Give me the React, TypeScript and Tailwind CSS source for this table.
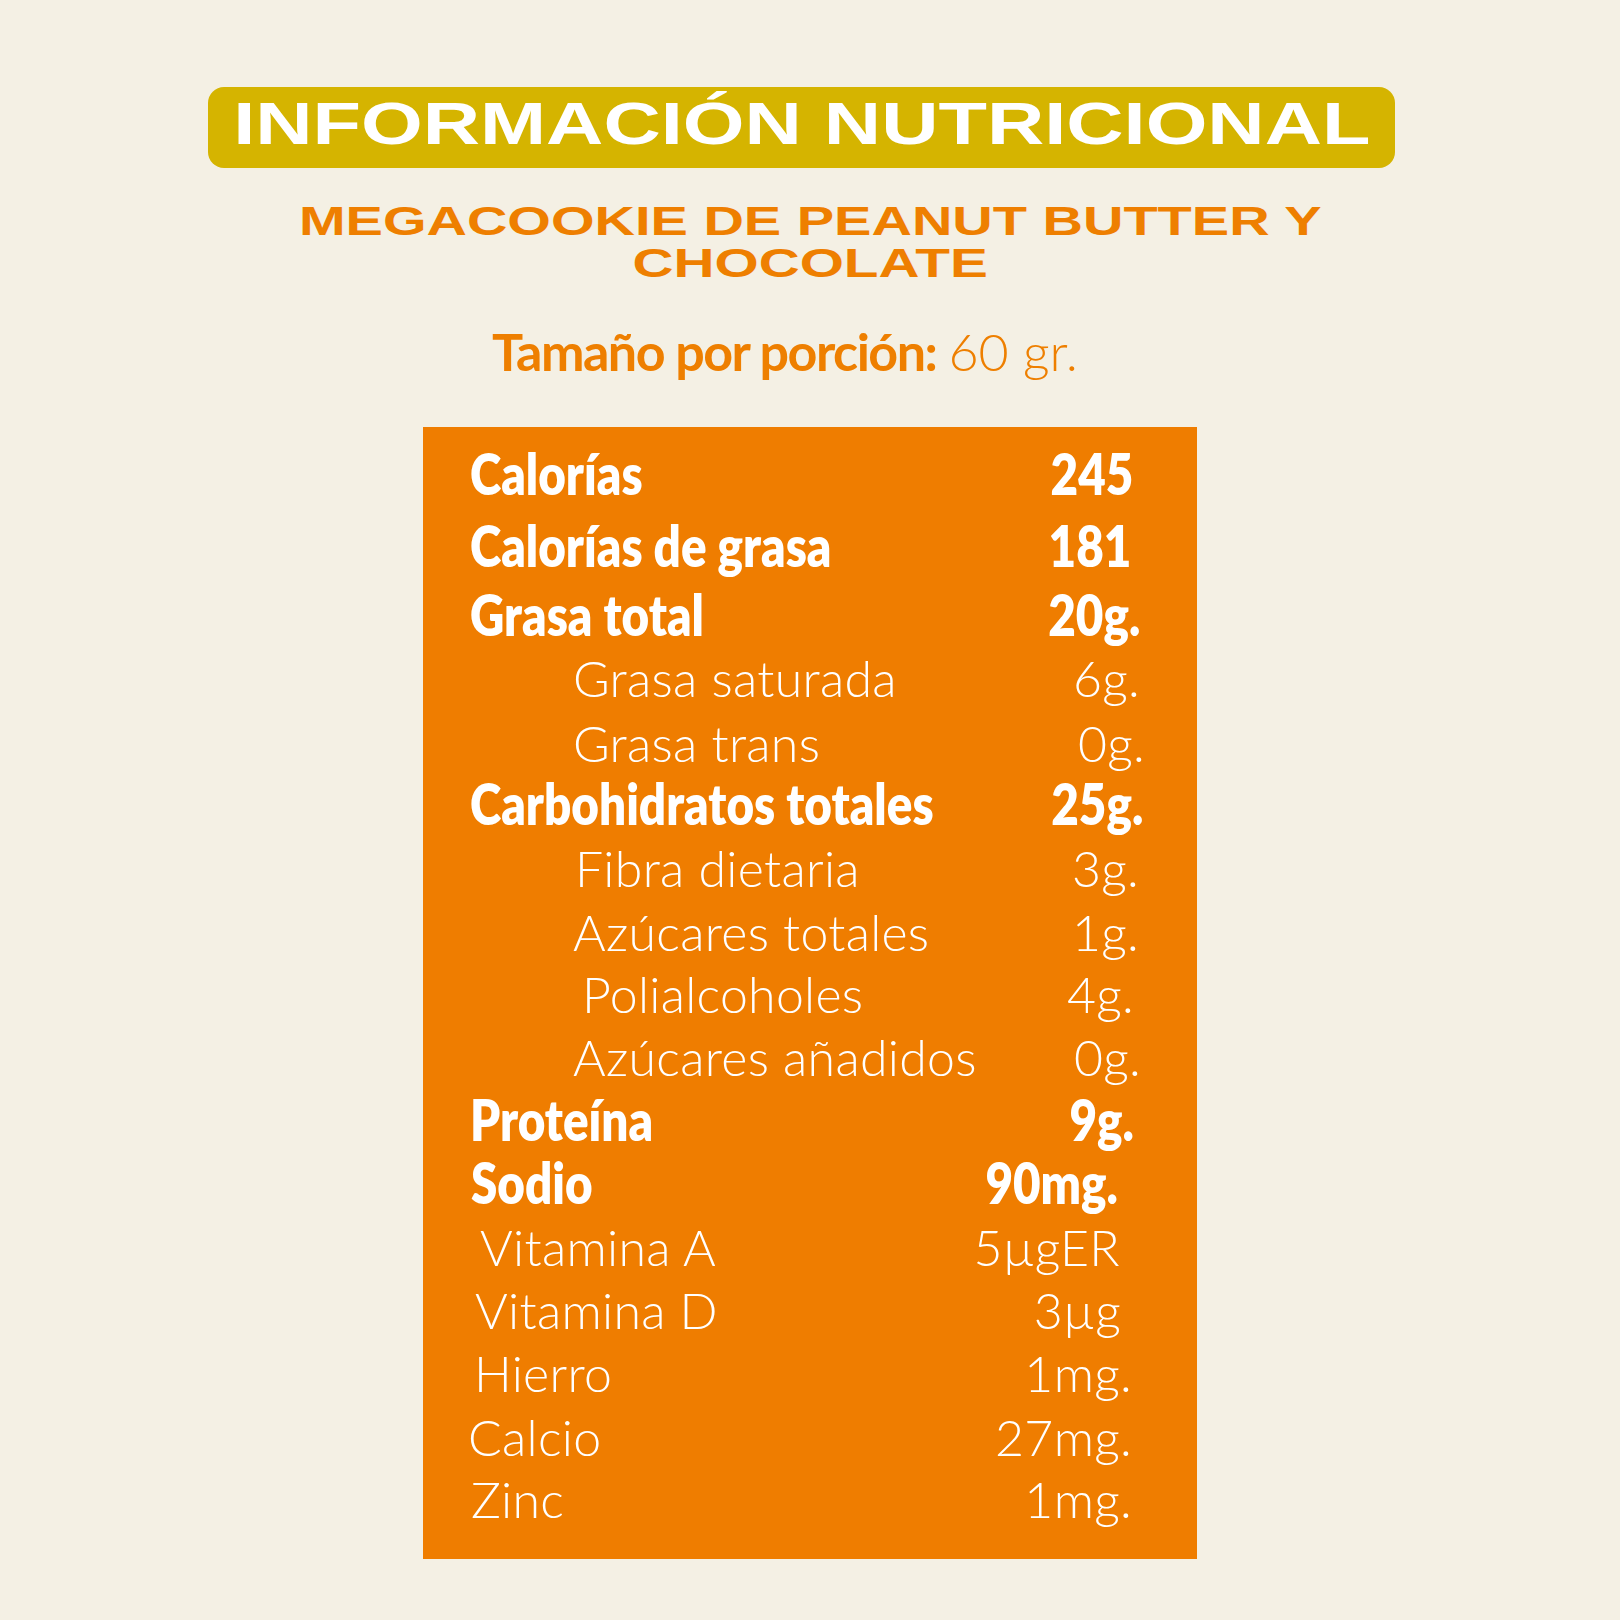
import React from "react";

type Row = {
  label: string;
  value: string;
  bold?: boolean;
  row: string; // margin + label indent + value right offset
};

const rows: Row[] = [
  { label: "Calorías", value: "245", bold: true, row: "mt-0 pl-[47px] pr-[64px]" },
  { label: "Calorías de grasa", value: "181", bold: true, row: "mt-[9px] pl-[47px] pr-[66px]" },
  { label: "Grasa total", value: "20g.", bold: true, row: "mt-[6px] pl-[47px] pr-[57px]" },
  { label: "Grasa saturada", value: "6g.", row: "mt-[1px] pl-[150px] pr-[57px]" },
  { label: "Grasa trans", value: "0g.", row: "mt-[2px] pl-[150px] pr-[52px]" },
  { label: "Carbohidratos totales", value: "25g.", bold: true, row: "-mt-[3px] pl-[47px] pr-[54px]" },
  { label: "Fibra dietaria", value: "3g.", row: "mt-[2px] pl-[152px] pr-[58px]" },
  { label: "Azúcares totales", value: "1g.", row: "mt-[1px] pl-[150px] pr-[58px]" },
  { label: "Polialcoholes", value: "4g.", row: "-mt-[1px] pl-[159px] pr-[63px]" },
  { label: "Azúcares añadidos", value: "0g.", row: "mt-0 pl-[150px] pr-[56px]" },
  { label: "Proteína", value: "9g.", bold: true, row: "-mt-[1px] pl-[47px] pr-[63px]" },
  { label: "Sodio", value: "90mg.", bold: true, row: "mt-0 pl-[48px] pr-[79px]" },
  { label: "Vitamina A", value: "5µgER", row: "mt-[2px] pl-[57px] pr-[77px]" },
  { label: "Vitamina D", value: "3µg", row: "mt-0 pl-[52px] pr-[76px]" },
  { label: "Hierro", value: "1mg.", row: "mt-0 pl-[51px] pr-[65px]" },
  { label: "Calcio", value: "27mg.", row: "mt-[1px] pl-[45px] pr-[65px]" },
  { label: "Zinc", value: "1mg.", row: "-mt-[1px] pl-[48px] pr-[65px]" },
];

export default function App() {
  return (
    <div className="w-[1620px] h-[1620px] bg-[#F4F0E4] flex flex-col overflow-hidden">
      <div className="mt-[87px] ml-[208px] w-[1187px] h-[81px] rounded-[16px] bg-[#D5B400] flex justify-center pt-[8px]">
        <span className="inline-block scale-x-[1.345] text-white font-bold text-[59px] leading-none font-['Liberation_Sans',Arial,sans-serif] whitespace-nowrap">
          INFORMACIÓN NUTRICIONAL
        </span>
      </div>

      <div className="mt-[32px] flex flex-col items-center text-[#EE7F00] font-bold text-[40px] leading-[42px] font-['Liberation_Sans',Arial,sans-serif]">
        <span className="inline-block scale-x-[1.4] whitespace-nowrap">MEGACOOKIE DE PEANUT BUTTER Y</span>
        <span className="inline-block scale-x-[1.42] whitespace-nowrap">CHOCOLATE</span>
      </div>

      <div className="mt-[41px] flex justify-center pr-[50px] text-[#EE7F00] text-[52px] leading-none font-['Lato',sans-serif] whitespace-nowrap">
        <span className="font-bold tracking-[-1.5px]">Tamaño por porción:</span>
        <span className="font-light ml-[12px]">60 gr.</span>
      </div>

      <div className="mt-[50px] mx-auto w-[774px] bg-[#EF7D00] pt-[15px] pb-[28px] text-white font-['Lato',sans-serif]">
        {rows.map((r) => (
          <div
            key={r.label}
            className={`flex justify-between items-baseline leading-[63px] whitespace-nowrap ${r.row} ${
              r.bold ? "font-extrabold text-[56px]" : "font-light text-[50px] tracking-[0.3px]"
            }`}
          >
            <span className={r.bold ? "inline-block origin-left scale-x-[0.85]" : ""}>{r.label}</span>
            <span className={r.bold ? "inline-block origin-right scale-x-[0.85]" : ""}>{r.value}</span>
          </div>
        ))}
      </div>
    </div>
  );
}
